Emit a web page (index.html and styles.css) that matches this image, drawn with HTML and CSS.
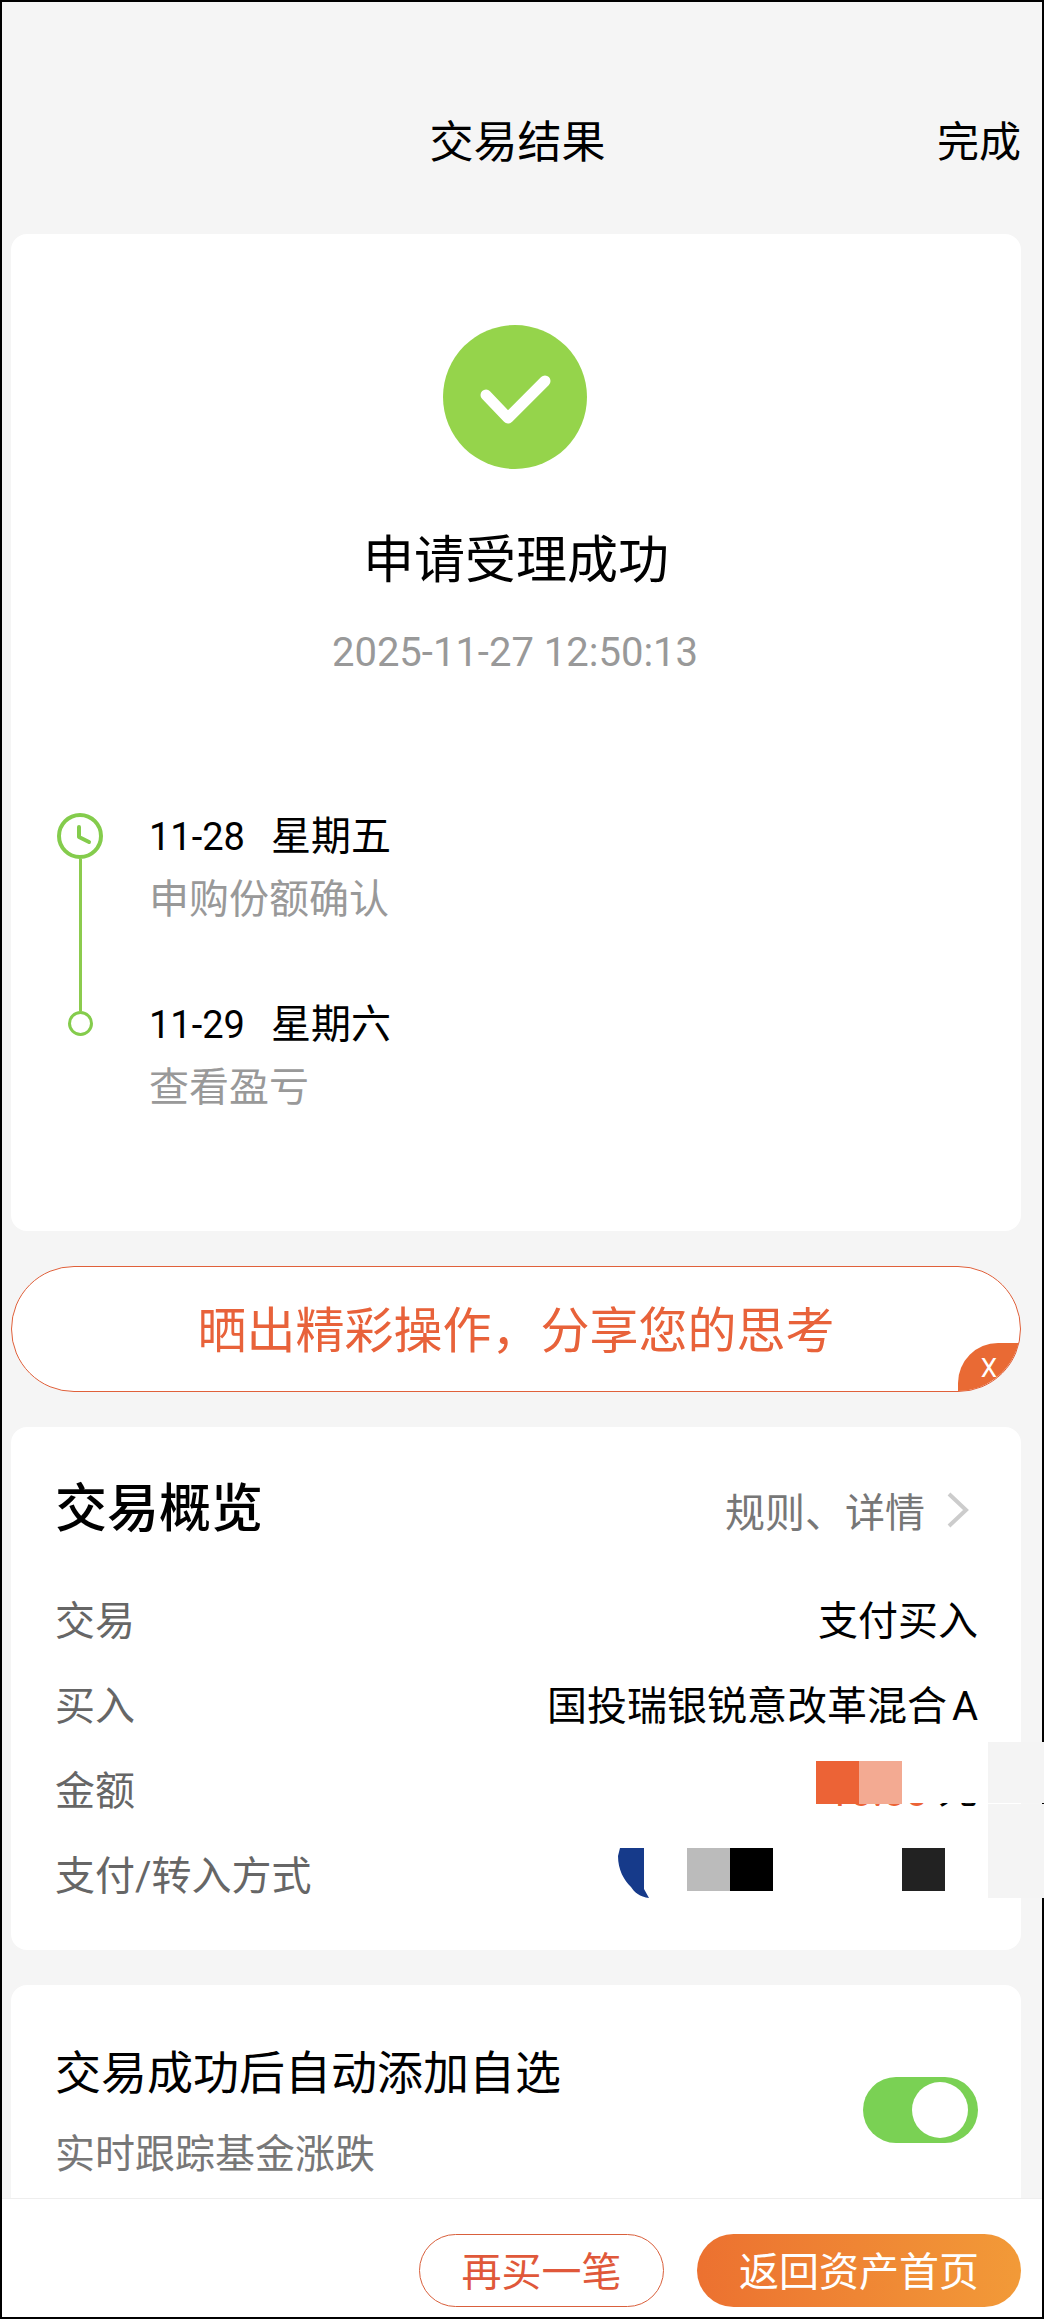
FILE: index.html
```html
<!DOCTYPE html>
<html lang="zh-CN">
    <head>
        <meta charset="utf-8">
        <meta name="viewport" content="width=device-width, initial-scale=1.0">
        <title>交易结果</title>
        <link rel="stylesheet" href="styles.css">
    </head>
    <body>
        <div class="screen">
            <div class="content">
                <div class="nav">
                    <span></span>
                    <h1 class="nav-title">交易结果</h1>
                    <span class="nav-done">完成</span>
                </div>

                <div class="card result">
                    <svg class="result-icon" viewBox="0 0 144 144">
                        <circle cx="72" cy="72" r="72" fill="#95d44b"/>
                        <path d="M43 70 L65 93 L102 56" fill="none" stroke="#fff" stroke-width="11" stroke-linecap="round" stroke-linejoin="round"/>
                    </svg>
                    <div class="result-title">申请受理成功</div>
                    <div class="result-time">2025-11-27 12:50:13</div>

                    <div class="steps">
                        <div class="step step-first">
                            <div class="step-mark">
                                <svg class="step-clock" viewBox="0 0 46 46">
                                    <circle cx="23" cy="23" r="21" fill="#fff" stroke="#84cc4c" stroke-width="4"/>
                                    <path d="M22 14 L22 24 L32 29" fill="none" stroke="#84cc4c" stroke-width="4" stroke-linecap="round" stroke-linejoin="round"/>
                                </svg>
                                <div class="step-line"></div>
                            </div>
                            <div class="step-text">
                                <div class="step-date"><span class="step-day">11-28</span><span>星期五</span></div>
                                <div class="step-desc">申购份额确认</div>
                            </div>
                        </div>
                        <div class="step">
                            <div class="step-mark">
                                <div class="step-dot"></div>
                            </div>
                            <div class="step-text">
                                <div class="step-date"><span class="step-day">11-29</span><span>星期六</span></div>
                                <div class="step-desc">查看盈亏</div>
                            </div>
                        </div>
                    </div>
                </div>

                <div class="share">
                    <span>晒出精彩操作，分享您的思考</span>
                    <div class="share-close">X</div>
                </div>

                <div class="card overview">
                    <div class="overview-head">
                        <h2 class="overview-title">交易概览</h2>
                        <div class="overview-link">
                            <span>规则、详情</span>
                            <svg class="chevron" viewBox="0 0 25 38">
                                <path d="M4 3 L21 19 L4 35" fill="none" stroke="#ccc" stroke-width="4"/>
                            </svg>
                        </div>
                    </div>
                    <div class="row">
                        <span class="row-label">交易</span>
                        <span>支付买入</span>
                    </div>
                    <div class="row">
                        <span class="row-label">买入</span>
                        <span>国投瑞银锐意改革混合<span class="fund-class">A</span></span>
                    </div>
                    <div class="row">
                        <span class="row-label">金额</span>
                        <span><span class="amount">10.00</span> 元</span>
                        <div class="amount-cover">
                            <i class="tile tile-orange"></i>
                            <i class="tile tile-peach"></i>
                        </div>
                    </div>
                    <div class="row">
                        <span class="row-label">支付/转入方式</span>
                        <div class="pay">
                            <svg class="pay-logo" viewBox="0 0 31 50">
                                <path d="M2 0 L26 0 L26 41 L31 50 C22 49 16 44 13 39 C6 32 0 22 0 8 Z" fill="#163a8a"/>
                            </svg>
                            <i class="tile tile-grey"></i>
                            <i class="tile tile-black"></i>
                            <i class="tile tile-dark"></i>
                        </div>
                    </div>
                </div>

                <div class="card watch">
                    <div class="watch-text">
                        <div class="watch-title">交易成功后自动添加自选</div>
                        <div class="watch-desc">实时跟踪基金涨跌</div>
                    </div>
                    <div class="switch"><div class="switch-thumb"></div></div>
                </div>
            </div>

            <div class="footer">
                <div class="btn btn-line">再买一笔</div>
                <div class="btn btn-fill">返回资产首页</div>
            </div>

            <!-- grey cover over the right end of the amount and payment rows -->
            <div class="edge-cover edge-cover-top"></div>
            <div class="edge-cover edge-cover-bottom"></div>
        </div>
    </body>
</html>
```

FILE: styles.css
```css
* {
    box-sizing: border-box;
}

body {
    margin: 0;
    font-family: Roboto, "Noto Sans CJK SC", sans-serif;
    font-size: 40px;
    color: #000;
}

h1, h2 {
    margin: 0;
    font-weight: 400;
}

.screen {
    position: relative;
    display: flex;
    flex-direction: column;
    width: 1044px;
    height: 2319px;
    border: 2px solid #000;
    background: #f5f5f5;
}

.content {
    flex: 1;
    min-height: 0;
    overflow: hidden;
    padding: 0 21px 0 9px;
}

/* top bar */
.nav {
    display: grid;
    grid-template-columns: 1fr auto 1fr;
    align-items: center;
    height: 232px;
    padding: 50px 0 0 3px;
}

.nav-title {
    font-size: 44px;
    line-height: 60px;
}

.nav-done {
    justify-self: end;
    font-size: 42px;
    line-height: 60px;
}

.card {
    background: #fff;
    border-radius: 16px;
}

/* result card */
.result {
    display: flex;
    flex-direction: column;
    align-items: center;
    height: 997px;
    padding-top: 91px;
}

.result-icon {
    width: 144px;
    height: 144px;
    margin-left: -3px;
}

.result-title {
    margin-top: 62px;
    font-size: 51px;
    line-height: 60px;
}

.result-time {
    margin: 37px 2px 0 0;
    font-size: 40px;
    line-height: 50px;
    color: #999;
}

.steps {
    align-self: stretch;
    margin-top: 134px;
    padding-left: 45px;
}

.step {
    display: flex;
}

.step-first {
    padding-bottom: 75px;
}

.step-mark {
    display: flex;
    flex-direction: column;
    align-items: center;
    flex: none;
    width: 48px;
    margin-right: 45px;
}

.step-clock {
    flex: none;
    width: 46px;
    height: 46px;
    margin-top: 1px;
}

.step-line {
    flex: 1;
    width: 3px;
    margin-bottom: -86px;
    background: #8ccb4e;
}

.step-dot {
    width: 25px;
    height: 25px;
    margin-top: 11px;
    border: 3px solid #84cc4c;
    border-radius: 50%;
    background: #fff;
}

.step-date {
    display: flex;
    gap: 26px;
    line-height: 50px;
}

.step-day {
    font-size: 38px;
}

.step-desc {
    margin-top: 13px;
    line-height: 50px;
    color: #999;
}

/* share banner */
.share {
    position: relative;
    display: flex;
    align-items: center;
    justify-content: center;
    height: 126px;
    margin-top: 35px;
    padding-bottom: 6px;
    border: 1.5px solid #e0603a;
    border-radius: 63px;
    background: #fff;
    overflow: hidden;
    font-size: 49px;
    color: #e8623a;
}

.share-close {
    position: absolute;
    right: 0;
    bottom: 0;
    width: 62px;
    height: 48px;
    border-top-left-radius: 40px;
    background: #e96a34;
    color: #fff;
    font-size: 26px;
    line-height: 50px;
    text-align: center;
}

/* overview card */
.overview {
    margin-top: 35px;
    height: 523px;
    padding: 53px 43px 0 44px;
}

.overview-head {
    display: flex;
    align-items: center;
    justify-content: space-between;
    height: 60px;
    margin-bottom: 38px;
}

.overview-title {
    font-size: 52px;
    font-weight: 500;
    line-height: 60px;
}

.overview-link {
    display: flex;
    align-items: center;
    gap: 20px;
    margin-right: 8px;
    color: #777;
}

.chevron {
    width: 25px;
    height: 38px;
}

.row {
    position: relative;
    display: flex;
    align-items: center;
    justify-content: space-between;
    height: 85px;
    padding-top: 2px;
    line-height: 50px;
}

.row-label {
    color: #666;
}

.fund-class {
    margin-left: 5px;
}

.amount {
    color: #ec6336;
    vertical-align: -3px;
}

.amount-cover {
    position: absolute;
    top: 0;
    right: 0;
    display: flex;
    align-items: flex-start;
    width: 258px;
    height: 55px;
    padding: 13px 0 0 96px;
    background: #fff;
}

.pay {
    display: flex;
    align-items: flex-start;
    padding-bottom: 8px;
    margin-right: 33px;
}

.pay-logo {
    width: 31px;
    height: 50px;
    margin-right: 38px;
}

.tile {
    display: block;
    flex: none;
    width: 43px;
    height: 43px;
}

.tile-orange {
    background: #ec6336;
}

.tile-peach {
    background: #f3aa92;
}

.tile-grey {
    background: #bbb;
}

.tile-black {
    background: #000;
}

.tile-dark {
    margin-left: 129px;
    background: #222;
}

/* auto watchlist card */
.watch {
    display: flex;
    align-items: flex-start;
    justify-content: space-between;
    height: 260px;
    margin-top: 35px;
    padding: 58px 43px 0 44px;
}

.watch-title {
    font-size: 46px;
    line-height: 60px;
}

.watch-desc {
    margin-top: 27px;
    line-height: 50px;
    color: #777;
}

.switch {
    display: flex;
    align-items: center;
    justify-content: flex-end;
    width: 115px;
    height: 66px;
    margin-top: 34px;
    padding-right: 10px;
    border-radius: 33px;
    background: #7ad154;
}

.switch-thumb {
    width: 56px;
    height: 56px;
    border-radius: 50%;
    background: #fff;
}

/* bottom bar */
.footer {
    display: flex;
    justify-content: flex-end;
    gap: 33px;
    flex: none;
    height: 119px;
    padding: 35px 21px 0 0;
    border-top: 1px solid #eee;
    background: #fff;
}

.btn {
    display: flex;
    align-items: center;
    justify-content: center;
    height: 73px;
    padding-bottom: 4px;
    border-radius: 37px;
}

.btn-line {
    width: 245px;
    border: 1.5px solid #d9603c;
    color: #e0583a;
}

.btn-fill {
    width: 324px;
    background: linear-gradient(90deg, #ec7130, #f29a38);
    color: #fff;
}

.edge-cover {
    position: absolute;
    left: 986px;
    right: -2px;
    background: #f4f4f4;
}

.edge-cover-top {
    top: 1740px;
    height: 61px;
}

.edge-cover-bottom {
    top: 1802px;
    height: 94px;
}
```
